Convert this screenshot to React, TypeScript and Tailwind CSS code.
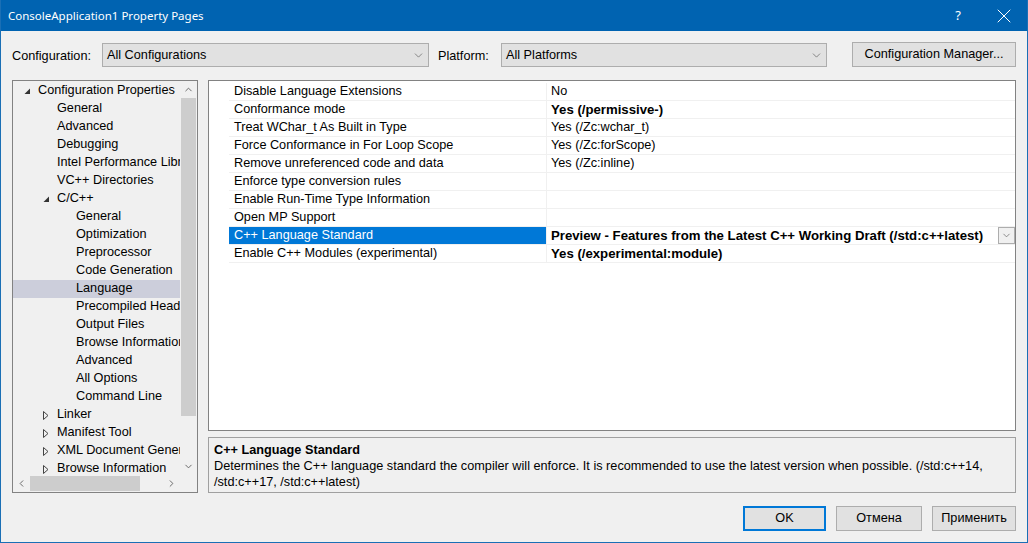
import { ChevronDown, ChevronUp, ChevronLeft, ChevronRight, X } from 'lucide-react';

const treeItems = [
  { label: 'Configuration Properties', level: 0, exp: 'open' },
  { label: 'General', level: 1 },
  { label: 'Advanced', level: 1 },
  { label: 'Debugging', level: 1 },
  { label: 'Intel Performance Libraries', level: 1 },
  { label: 'VC++ Directories', level: 1 },
  { label: 'C/C++', level: 1, exp: 'open' },
  { label: 'General', level: 2 },
  { label: 'Optimization', level: 2 },
  { label: 'Preprocessor', level: 2 },
  { label: 'Code Generation', level: 2 },
  { label: 'Language', level: 2, selected: true },
  { label: 'Precompiled Headers', level: 2 },
  { label: 'Output Files', level: 2 },
  { label: 'Browse Information', level: 2 },
  { label: 'Advanced', level: 2 },
  { label: 'All Options', level: 2 },
  { label: 'Command Line', level: 2 },
  { label: 'Linker', level: 1, exp: 'closed' },
  { label: 'Manifest Tool', level: 1, exp: 'closed' },
  { label: 'XML Document Generator', level: 1, exp: 'closed' },
  { label: 'Browse Information', level: 1, exp: 'closed' },
  { label: 'Build Events', level: 1, exp: 'closed' },
];

const indent = ['pl-[8px]', 'pl-[27px]', 'pl-[46px]'];

const props = [
  { name: 'Disable Language Extensions', value: 'No' },
  { name: 'Conformance mode', value: 'Yes (/permissive-)', bold: true },
  { name: 'Treat WChar_t As Built in Type', value: 'Yes (/Zc:wchar_t)' },
  { name: 'Force Conformance in For Loop Scope', value: 'Yes (/Zc:forScope)' },
  { name: 'Remove unreferenced code and data', value: 'Yes (/Zc:inline)' },
  { name: 'Enforce type conversion rules', value: '' },
  { name: 'Enable Run-Time Type Information', value: '' },
  { name: 'Open MP Support', value: '' },
  {
    name: 'C++ Language Standard',
    value: 'Preview - Features from the Latest C++ Working Draft (/std:c++latest)',
    bold: true,
    selected: true,
  },
  { name: 'Enable C++ Modules (experimental)', value: 'Yes (/experimental:module)', bold: true },
];

function OpenArrow() {
  return (
    <svg width="7" height="7" viewBox="0 0 7 7" className="ml-[3px]">
      <polygon points="6,0.5 6,6 0.5,6" fill="#333" />
    </svg>
  );
}

function ClosedArrow() {
  return (
    <svg width="6" height="9" viewBox="0 0 6 9" className="ml-[3px]">
      <polygon points="0.5,0.5 5,4.5 0.5,8.5" fill="none" stroke="#444" strokeWidth="1" />
    </svg>
  );
}

function Select({ value, width }: { value: string; width: string }) {
  return (
    <div
      className={`${width} flex h-[24px] items-center justify-between border border-[#adadad] bg-[#e1e1e1] pl-[4px] pr-[3px] pt-[2px]`}
    >
      <span>{value}</span>
      <ChevronDown className="h-[13px] w-[13px] text-[#606060]" strokeWidth={1.3} />
    </div>
  );
}

function Tree() {
  return (
    <div className="flex h-[413px] w-[186px] flex-col border border-[#828282] bg-[#f0f0f0]">
      <div className="flex h-[394px]">
        <div className="w-[167px] overflow-hidden pt-[1px]">
          {treeItems.map((item, i) => (
            <div
              key={i}
              className={`flex h-[18px] items-center whitespace-nowrap ${indent[item.level]} ${
                item.selected ? 'bg-[#cccedb]' : ''
              }`}
            >
              <div className="flex w-[17px] shrink-0 items-center">
                {item.exp === 'open' && <OpenArrow />}
                {item.exp === 'closed' && <ClosedArrow />}
              </div>
              <span>{item.label}</span>
            </div>
          ))}
        </div>
        {/* vertical scrollbar */}
        <div className="flex w-[17px] flex-col bg-[#f0f0f0]">
          <div className="flex h-[17px] items-center justify-center">
            <ChevronUp className="h-[11px] w-[11px] text-[#606060]" strokeWidth={2} />
          </div>
          <div className="mx-[1px] h-[318px] bg-[#cdcdcd]" />
          <div className="flex-1" />
          <div className="flex h-[17px] items-center justify-center">
            <ChevronDown className="h-[11px] w-[11px] text-[#606060]" strokeWidth={2} />
          </div>
        </div>
      </div>
      {/* horizontal scrollbar */}
      <div className="flex h-[17px]">
        <div className="flex w-[167px] items-center bg-[#f0f0f0]">
          <div className="flex w-[17px] justify-center">
            <ChevronLeft className="h-[11px] w-[11px] text-[#606060]" strokeWidth={2} />
          </div>
          <div className="h-[15px] w-[110px] bg-[#cdcdcd]" />
          <div className="flex-1" />
          <div className="flex w-[17px] justify-center">
            <ChevronRight className="h-[11px] w-[11px] text-[#606060]" strokeWidth={2} />
          </div>
        </div>
        <div className="w-[17px] bg-[#f0f0f0]" />
      </div>
    </div>
  );
}

function PropertyGrid() {
  return (
    <div className="flex h-[351px] border border-[#828282] bg-white pt-[2px]">
      <div className="w-[20px] shrink-0" />
      <div className="flex flex-1 flex-col">
        {props.map((p, i) => (
          <div key={i} className="flex h-[18px] border-b border-[#f0f0f0]">
            <div
              className={`flex w-[318px] shrink-0 items-center border-r border-[#f0f0f0] pl-[5px] ${
                p.selected ? 'bg-[#0078d7] text-white' : ''
              }`}
            >
              {p.name}
            </div>
            <div
              className={`flex flex-1 items-center justify-between pl-[4px] ${
                p.bold ? 'text-[13.2px] font-bold' : ''
              }`}
            >
              <span>{p.value}</span>
              {p.selected && (
                <div className="flex h-[17px] w-[17px] items-center justify-center border border-[#adadad] bg-[#f0f0f0]">
                  <ChevronDown className="h-[11px] w-[11px] text-[#606060]" strokeWidth={1.5} />
                </div>
              )}
            </div>
          </div>
        ))}
      </div>
    </div>
  );
}

function Button({ label, width, primary }: { label: string; width: string; primary?: boolean }) {
  return (
    <div
      className={`${width} flex h-[25px] items-center justify-center bg-[#e1e1e1] pt-[1px] ${
        primary ? 'border-2 border-[#0078d7]' : 'border border-[#adadad]'
      }`}
    >
      {label}
    </div>
  );
}

export default function App() {
  return (
    <div className="flex h-[543px] w-[1028px] flex-col overflow-hidden border-x border-b border-[#1a6fb5] bg-[#f0f0f0] font-['Liberation_Sans',Arial,sans-serif] text-[12.7px] text-black">
      {/* Title bar */}
      <div className="flex h-[31px] shrink-0 items-center justify-between bg-[#0063b1] pl-[7px] text-white">
        <span className="font-['Noto_Sans','Liberation_Sans',sans-serif] text-[11.5px]">
          ConsoleApplication1 Property Pages
        </span>
        <div className="flex items-center">
          <span className="w-[46px] text-center font-['Noto_Sans',sans-serif] text-[13px]">?</span>
          <div className="flex w-[46px] justify-center">
            <X className="h-[24px] w-[24px]" strokeWidth={1} />
          </div>
        </div>
      </div>

      <div className="flex flex-1 flex-col px-[11px]">
        {/* Configuration row */}
        <div className="mt-[11px] flex h-[25px] items-center">
          <span className="w-[90px] pt-[4px]">Configuration:</span>
          <Select value="All Configurations" width="w-[327px]" />
          <span className="ml-[9px] w-[63px] pt-[4px]">Platform:</span>
          <Select value="All Platforms" width="w-[326px]" />
          <div className="flex-1" />
          <div className="flex h-[25px] w-[164px] items-center justify-center border border-[#adadad] bg-[#e1e1e1] pt-[1px]">
            Configuration Manager...
          </div>
        </div>

        {/* Main area */}
        <div className="mt-[13px] flex gap-[10px]">
          <Tree />
          <div className="flex flex-1 flex-col">
            <PropertyGrid />
            <div className="mt-[6px] h-[56px] border border-[#a0a0a0] bg-[#f0f0f0] px-[5px] pt-[4px] leading-[16px]">
              <div className="font-bold">C++ Language Standard</div>
              <div>
                Determines the C++ language standard the compiler will enforce. It is recommended to use the
                latest version when possible. (/std:c++14, /std:c++17, /std:c++latest)
              </div>
            </div>
          </div>
        </div>

        {/* Buttons */}
        <div className="mt-[13px] flex justify-end gap-[10px]">
          <Button label="OK" width="w-[83px]" primary />
          <Button label="Отмена" width="w-[86px]" />
          <Button label="Применить" width="w-[84px]" />
        </div>
      </div>
    </div>
  );
}
